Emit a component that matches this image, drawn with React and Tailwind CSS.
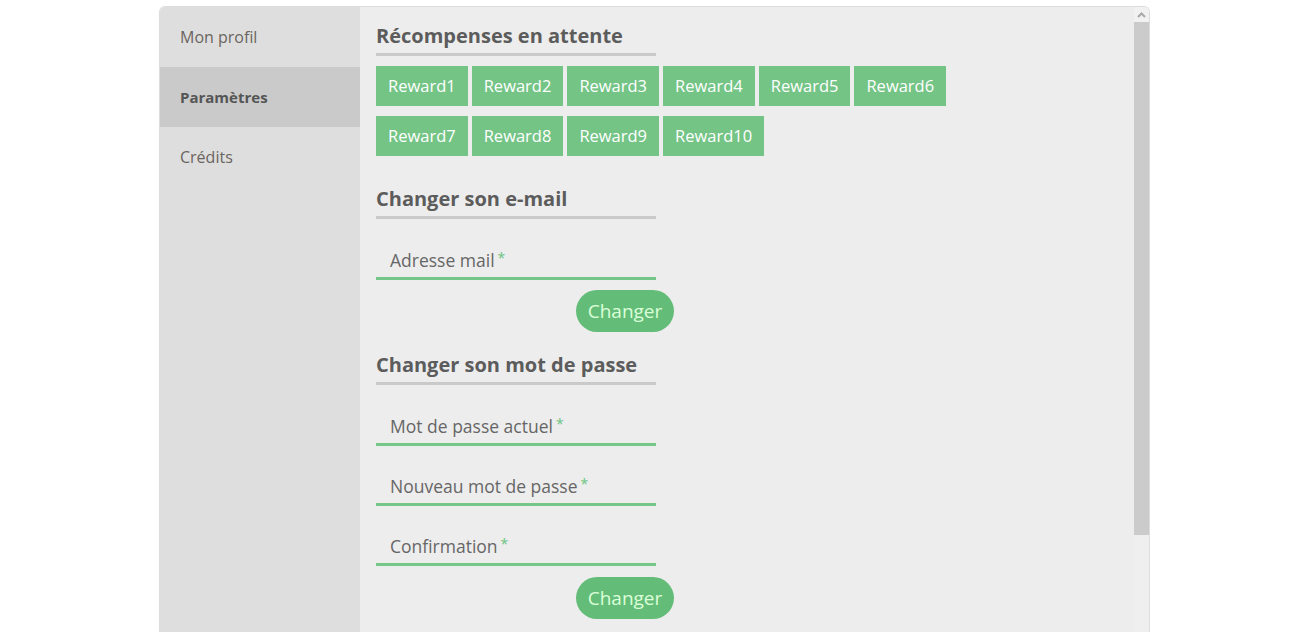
import React from "react";

const rewards = ["Reward1", "Reward2", "Reward3", "Reward4", "Reward5", "Reward6", "Reward7", "Reward8", "Reward9", "Reward10"];

const menuItems = [
  { label: "Mon profil", active: false },
  { label: "Paramètres", active: true },
  { label: "Crédits", active: false },
];

const SectionTitle = ({ children }) => (
  <h2 className="w-[280px] border-b-[3px] border-[#c9c9c9] pb-[4px] text-[20px] font-bold leading-[26px] text-[#5c5c5c]">
    {children}
  </h2>
);

const Field = ({ label, first }) => (
  <div
    className={`${first ? "mt-[21px]" : "mt-[20px]"} flex h-[40px] w-[280px] items-end border-b-[3px] border-[#76c68a] px-[14px] pb-[6px]`}
  >
    <span className="text-[17.5px] leading-[22px] text-[#666]">{label}</span>
    <span className="ml-[3px] pb-[6px] text-[14px] leading-[14px] text-[#6cc483]">*</span>
  </div>
);

const ChangeButton = ({ tight }) => (
  <div className={`flex w-[298px] justify-end ${tight ? "pt-[10px]" : "pt-[11px]"}`}>
    <button className="h-[42px] w-[98px] rounded-full bg-[#63bd78] text-[19px] text-[#dbffd9]">Changer</button>
  </div>
);

export default function App() {
  return (
    <div className="h-screen overflow-hidden bg-white pt-[6px] font-['Open_Sans',sans-serif]">
      <div className="mx-auto flex h-[640px] w-[991px] overflow-hidden rounded-t-[6px] border border-[#dcdcdc] border-b-0">
        {/* Sidebar */}
        <div className="w-[200px] shrink-0 bg-[#dedede]">
          {menuItems.map((item) => (
            <div
              key={item.label}
              className={`flex h-[60px] items-center px-[20px] ${
                item.active ? "bg-[#cacaca] text-[15px] font-bold text-[#555]" : "text-[16px] text-[#6a6560]"
              }`}
            >
              {item.label}
            </div>
          ))}
        </div>

        {/* Content */}
        <div className="flex-1 bg-[#ededed] px-[16px] pt-[16px]">
          <SectionTitle>Récompenses en attente</SectionTitle>
          <div className="mt-[10px] flex w-[600px] flex-wrap gap-x-[4px] gap-y-[10px]">
            {rewards.map((r) => (
              <div key={r} className="flex h-[40px] items-center bg-[#74c486] px-[12px] text-[16.5px] text-white">
                {r}
              </div>
            ))}
          </div>

          <div className="mt-[30px]">
            <SectionTitle>Changer son e-mail</SectionTitle>
          </div>
          <Field label="Adresse mail" first />
          <ChangeButton tight />

          <div className="mt-[20px]">
            <SectionTitle>Changer son mot de passe</SectionTitle>
          </div>
          <Field label="Mot de passe actuel" first />
          <Field label="Nouveau mot de passe" />
          <Field label="Confirmation" />
          <ChangeButton />
        </div>

        {/* Scrollbar */}
        <div className="flex w-[15px] shrink-0 flex-col bg-[#efefef]">
          <div className="flex h-[15px] items-center justify-center bg-[#f1f1f1]">
            <svg width="9" height="6" viewBox="0 0 9 6">
              <path d="M1 5 L4.5 1.5 L8 5" stroke="#a8a8a8" strokeWidth="2" fill="none" />
            </svg>
          </div>
          <div className="h-[513px] bg-[#cbcbcb]" />
        </div>
      </div>
    </div>
  );
}
